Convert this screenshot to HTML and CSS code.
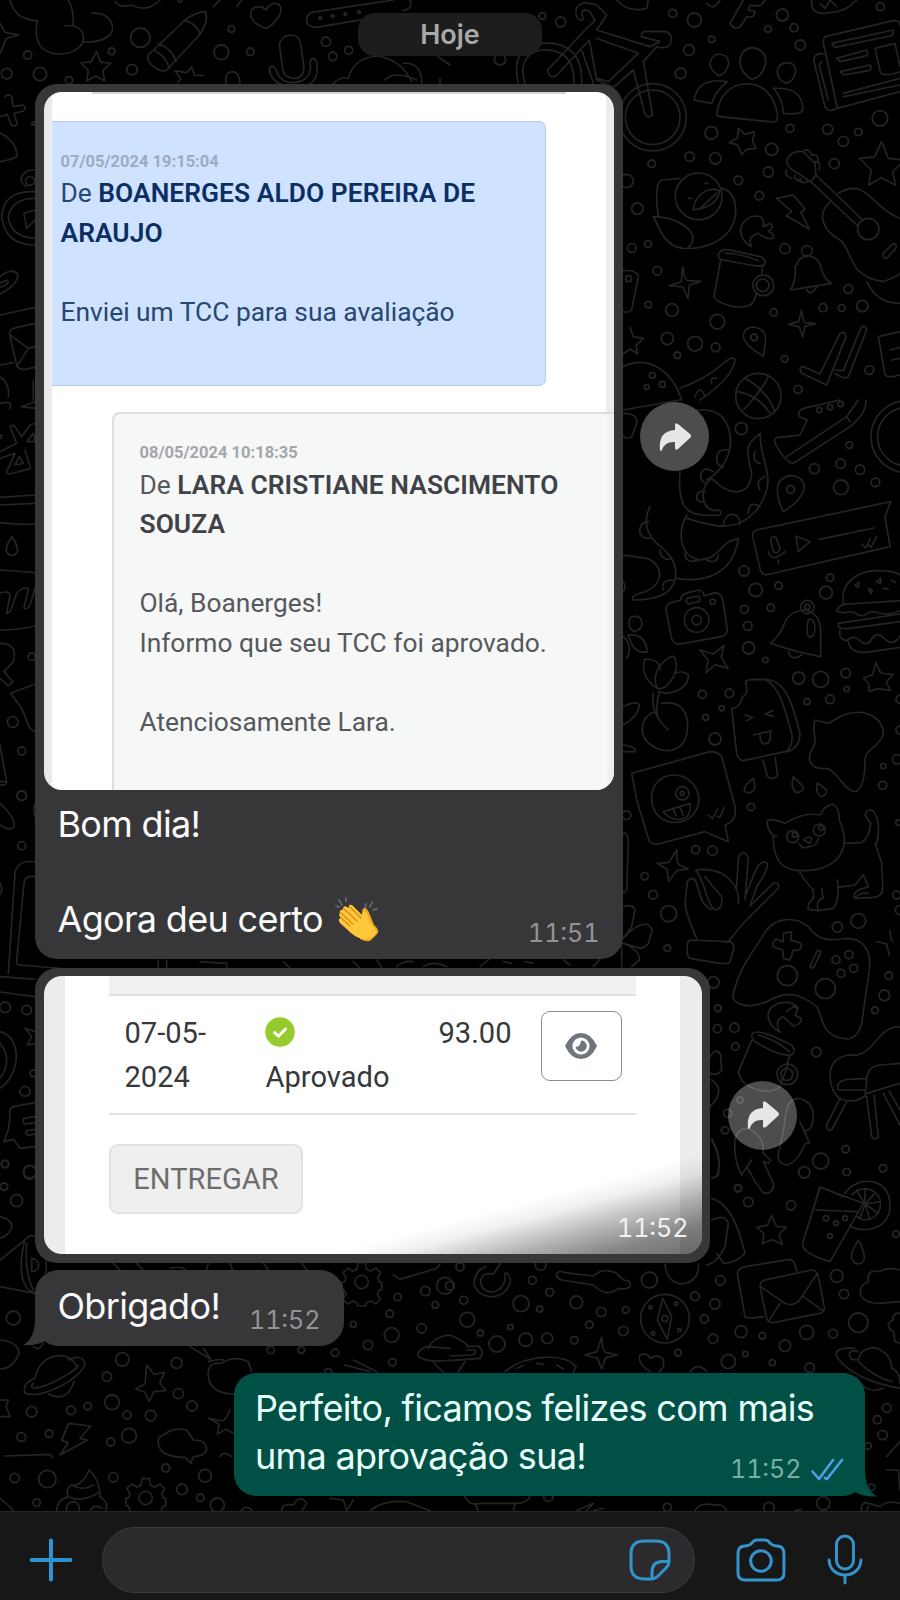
FILE: index.html
```html
<!DOCTYPE html>
<html lang="pt-BR">
<head>
<meta charset="utf-8">
<title>Conversa</title>
<link rel="stylesheet" href="styles.css">
</head>
<body>
<div class="screen">
<svg class="wallpaper" width="900" height="1600" viewBox="0 0 900 1600" aria-hidden="true">
 <g id="dots"></g>
 <!-- top left -->
 <g transform="scale(.33333)">
  <path d="M30 0Q45 60 112 62M112 62C100 120 120 162 180 162C260 160 270 90 220 78Q205 75 195 78M205 0Q225 40 218 76M275 40C330 35 350 80 330 105Q300 130 250 125M0 70L15 97L55 105L20 115L0 160M345 5Q360 25 395 15Q440 40 480 0M640 20L660 0M710 20L725 0"/>
  <path d="M290 155l12 32 30 2-23 22 5 32-27-15-27 15 5-32-23-22 32-4zM575 200l8 25 28 2M575 200l-15 18-35-6 18 25-10 10M445 165L555 60Q590 35 618 35Q625 70 598 105L500 210Q480 220 450 190Q440 178 445 165ZM475 130Q520 150 528 185M462 150Q500 170 508 205M555 62Q590 70 600 103"/>
  <path d="M800 85C760 75 735 40 765 22Q785 15 798 30Q815 0 838 15C855 35 825 70 800 85ZM1230 0Q1240 25 1210 32M1090 58L950 82Q915 80 920 55Q925 35 950 35L1180 0"/>
  <path d="M872 105Q900 105 902 135L912 200Q912 235 880 235Q850 232 848 205L838 135Q842 108 872 105ZM808 205Q812 245 850 255M808 205Q820 190 828 210Q840 250 885 248Q940 240 930 185Q940 165 950 185Q958 240 925 255M680 255Q670 215 700 215Q720 220 720 255M1000 250Q1020 230 1045 235Q1060 175 1130 168Q1200 175 1235 245M1210 190Q1265 185 1265 250M1155 240Q1180 210 1250 240M1320 235v20M1300 160l50 35"/>
  <path d="M15 290q10-10 20 0l5 30 30-5q10 8 0 18l-28 8 10 30q-8 10-18 5l-12-32-30 8M0 398Q55 430 50 470Q30 480 0 485M100 510C65 510 50 545 80 560M105 575Q10 570 5 650Q15 735 105 735M105 595Q35 595 25 650Q30 710 105 715M105 630L72 640L80 685L105 660M0 830Q30 805 52 820Q60 850 0 882M0 850L20 840Q35 850 0 862M0 945L105 922M105 970L40 985Q25 990 30 1010L50 1095Q55 1110 75 1108L105 1102M30 1005L85 1045L105 1040M85 1045L50 1100M0 1095L40 1088M0 1130q30 20 25 60M100 1140v60"/>
 </g>
 <!-- top right -->
 <g transform="translate(450 0) scale(.33333)">
  <path d="M205 252Q180 140 270 130Q400 120 395 252M225 252Q200 165 275 150Q375 145 372 252M293 210L405 90L435 62L420 35Q385 20 400 55Q395 70 380 50Q370 15 405 8L440 15L470 45L440 90L600 140L630 125L575 110Q570 90 600 95L650 95Q670 105 662 130Q650 150 620 140L580 185L608 345Q590 360 583 335L550 210L490 262L440 240L418 120L318 228Q295 235 293 210ZM440 115L565 160L475 245L440 235M395 150L430 250"/>
  <circle cx="608" cy="352" r="101"/><circle cx="608" cy="352" r="82"/>
  <path d="M500 0Q535 40 590 25L595 0M770 10q20 25 40-10M880 0L840 70Q850 90 870 80L890 50Q915 55 915 35L895 30L900 15Q935 25 945 0M1085 0Q1080 50 1140 38Q1190 35 1220 0M1110 10l15 15 15-25 20 20"/>
  <path d="M1125 110L1330 62Q1350 60 1350 75M1125 110Q1115 120 1125 150L1162 325L1350 275M1110 160Q1090 165 1092 185L1125 320Q1135 340 1162 325M1110 160L1130 165M1115 185Q1105 190 1110 205L1135 300M1145 130L1330 90Q1330 108 1320 108L1155 142ZM1160 175L1250 150Q1258 165 1245 168L1170 185ZM1172 215L1260 195Q1268 208 1255 212L1180 225ZM1180 280L1350 235M1182 290L1350 255M1275 145L1335 130L1350 200M1275 145L1292 220Q1310 230 1350 215"/>
  <path d="M805 162Q840 165 835 195Q825 225 805 227Q780 210 780 190Q785 165 805 162ZM908 143Q950 150 947 190Q935 235 905 237Q870 220 870 180Q875 145 908 143ZM1010 188Q1040 190 1037 215Q1030 245 1010 250Q980 240 982 210Q988 190 1010 188ZM800 345C810 220 970 220 982 345Q985 365 970 366L810 350ZM832 245Q745 230 732 300L785 310Q795 275 832 245ZM970 265Q1060 260 1058 330Q1055 345 1000 340Q1000 300 970 265Z"/>
  <path d="M865 385l20 18 28-8-5 30 10 20-28 3-15 15-12-28-25-7 25-15zM1295 425l20 50 48 5-35 35 8 40-42-22-38 22 8-45-35-35 45-5z"/>
  <path d="M625 650Q610 540 640 540L690 535M815 565C860 575 870 640 840 690Q790 750 700 745Q650 740 625 680L610 650Q660 650 700 675Q750 710 715 742M730 630C735 580 775 560 808 572Q805 620 730 630ZM750 625L800 580M765 550h8M715 595h10"/>
  <circle cx="746" cy="589" r="70"/>
  <path d="M905 740Q890 710 925 700Q950 720 970 715Q975 700 955 695Q975 680 960 670L940 680Q945 650 920 648C870 650 850 710 905 740ZM980 595l50-10 35 42-12 10 25 50-70-40 18-12z"/>
  <path d="M805 765Q810 745 840 750L930 770Q950 775 943 795Q930 800 900 795L820 780Q805 778 805 765ZM825 760Q860 758 925 782M812 780L792 890Q795 905 850 920Q900 925 910 905L920 880M938 800L935 825"/>
  <circle cx="940" cy="856" r="31"/><circle cx="938" cy="856" r="19"/><circle cx="1071" cy="753" r="16"/>
  <path d="M1022 870Q1040 835 1035 800Q1055 760 1080 768Q1110 775 1115 810Q1125 840 1145 850ZM1070 868Q1080 890 1100 862M1080 545L1045 520Q1010 505 1010 480Q1025 450 1060 455L1095 490L1098 525L1082 545L1220 675M1098 525L1238 660M1060 455q15-15 25 10M1085 465q20-5 20 20M1095 485q20 0 12 25M1010 510q-10 15 15 25M1035 525q-5 15 20 20M1050 535q0 20 28 8"/>
  <circle cx="1255" cy="687" r="32"/>
  <path d="M1165 580C1250 530 1260 620 1350 655M1142 605C1100 640 1115 690 1170 720C1210 750 1190 830 1300 845Q1340 830 1350 820M1250 845Q1280 910 1350 910M1300 760L1330 730Q1345 735 1335 748L1310 775Q1297 775 1300 760M518 812Q560 808 565 830L545 930Q535 940 520 935"/>
  <path d="M698 800q5 40 15 42l40 2-35 12-4 40-15-35-40-4 35-12zM1055 930q3 32 10 38l32 3-32 8-7 32-10-30-32-8 30-8zM540 982l10 28 30 5-22 22 5 25-22-15-22 15"/>
  <path d="M940 1068Q880 1035 880 1005C885 970 945 975 947 1015Q945 1045 940 1068ZM1050 1105Q1055 1095 1070 1105L1110 1122L1170 1000Q1185 990 1188 1010L1130 1155L1055 1120ZM1155 1110L1180 1112L1232 985Q1245 970 1250 990L1195 1130Q1185 1140 1155 1120M1285 1010L1350 995M1285 1010L1305 1125Q1315 1135 1350 1125M1320 1050L1350 1042M1325 1080L1350 1075"/>
  <path d="M518 1100C600 1060 670 1120 695 1200M690 1165Q770 1135 820 1090Q850 1065 855 1080Q850 1130 750 1200M735 1190q15-40 30 0M785 1150q-5-20 15-15"/>
  <circle cx="925" cy="1188" r="68"/><path d="M885 1135Q950 1170 975 1235M865 1175Q930 1190 960 1240M955 1130Q930 1180 880 1230"/>
 </g>
 <!-- middle right -->
 <g transform="translate(450 400) scale(.33333)">
  <path d="M518 30L690 0M518 40Q565 40 560 70L545 110Q530 118 520 110M600 320Q570 380 620 430Q690 480 675 540Q660 600 550 600Q540 590 570 580C650 560 640 490 590 475L518 465M595 365Q565 370 570 400Q580 420 605 412M630 450Q630 480 665 478M640 570Q630 540 670 540M520 545Q530 560 520 575"/>
  <path d="M740 30Q840 20 842 130Q835 200 770 240M690 215C680 340 720 350 810 345Q820 325 790 332C750 320 750 260 785 235C850 300 900 280 905 220C890 150 880 140 930 100C930 200 990 230 920 330C860 400 790 380 710 355M710 345C680 400 690 470 750 480C820 470 800 430 865 415C850 520 770 550 680 535M835 150q-35-5-35 30q0 15 20 22M790 215q-30-20-38 10q0 20 15 25M765 275q-25-5-25 20q5 15 20 10M915 155q-10 30 15 35M945 230q-30 10-15 40M930 320q-35-20-35 20M820 375q5-35 30-32 20 5 20 30M705 460q0 30 35 22M770 480q30 15 35-15"/>
  <path d="M1030 190Q1010 190 975 130Q970 110 990 112L1050 105L1072 60L1048 50Q1040 35 1060 25L1170 0M1030 190L1200 80Q1250 40 1248 0M1010 170L1190 50L1225 0M1190 50L1200 65"/>
  <circle cx="1371" cy="110" r="108"/><circle cx="1371" cy="110" r="88"/>
  <path d="M1000 335Q975 285 985 250C1010 210 1070 225 1062 270Q1050 305 1000 335ZM920 390L1322 305L1305 350L1320 440L960 522Q935 530 930 505L908 410Q905 395 920 390ZM962 420Q965 405 978 412L990 445Q985 465 970 455ZM955 455Q965 490 1005 455M985 480v12M1038 408L1080 425L1045 455ZM1108 418L1272 384M1235 432l12 12 15-30M1255 435l8 7 17-32"/>
  <path d="M665 608L692 600Q695 580 715 578L745 570Q765 575 762 588L795 578Q815 580 818 600L832 690Q830 705 815 710L690 732Q670 735 665 715L648 630Q648 612 665 608ZM710 595L745 588Q755 600 745 605L715 612Q705 605 710 595Z"/>
  <circle cx="740" cy="660" r="37"/><circle cx="740" cy="660" r="14"/><circle cx="788" cy="605" r="8"/><circle cx="1072" cy="621" r="20"/><circle cx="1072" cy="621" r="8"/>
  <path d="M962 730Q995 700 1005 665Q1025 630 1065 630Q1110 640 1112 690L1112 770Q1030 755 962 730ZM1015 755Q1025 785 1055 765M1075 660Q1090 650 1095 680Q1095 710 1080 712Q1065 705 1075 660ZM1180 610C1170 550 1220 510 1290 512Q1330 512 1350 525M1160 632Q1170 610 1200 612L1350 602M1160 632q15 10 30 5t30 5t30 0t30-5t30 5t40-10M1165 670L1350 642M1165 670Q1160 690 1200 685L1350 665M1170 690Q1165 720 1190 722q20-20 40 0t35-5t40 0t45-10M1195 725Q1200 760 1250 757L1350 742M1215 555l12-8-2 16zM1255 565l12 6-4 10zM1280 545l12-10v16zM1300 565l15 2M1325 540l12 8"/>
  <path d="M750 750l40 12 32-26-8 35 20 35-38-12-28 24 6-38zM1278 787l14 32 37 5-20 22 12 25-38-5-25 8-3-25-15-15 28-10z"/>
  <path d="M622 865C580 840 575 800 585 778Q625 775 632 808M622 865C600 820 640 775 672 768Q690 810 660 845Q640 870 622 865ZM675 820Q700 810 715 825Q715 870 650 880L625 875M610 880Q600 940 655 990M628 880Q618 905 622 945M615 935C570 950 560 1010 610 1040C670 1070 720 1040 712 960Q700 900 635 910M550 650q20-5 25 15t-20 30q-18-5-18-25t13-20M535 705q50-5 58 50Q550 765 535 705M520 710Q550 740 530 775M518 920Q560 900 568 915Q565 950 520 975M520 1035Q560 1040 555 1055H520"/>
  <path d="M845 925Q870 925 878 890Q895 885 888 850Q880 838 920 838L960 840C1010 850 1030 920 1050 1000Q1050 1040 1020 1052L880 1082Q865 1080 860 1060ZM945 838C990 860 1005 930 1025 1000Q1030 1035 1010 1055M938 1080L952 1128Q970 1145 983 1125L975 1072M885 945L908 952 890 962M968 932L945 942 970 950M910 1005L965 992M930 1005Q930 1030 945 1032 965 1030 960 998M1095 960L1135 970L1180 945C1250 920 1310 960 1298 1010C1270 1060 1240 1040 1245 1100Q1240 1170 1215 1175C1180 1170 1160 1110 1130 1105C1080 1110 1070 1080 1085 1050C1110 1010 1080 1000 1095 960Z"/>
  <path d="M545 1120L780 1055Q805 1055 815 1070L850 1200M545 1120L560 1200M605 1200C600 1100 740 1100 747 1200M910 1135Q875 1160 885 1175Q910 1185 915 1160ZM1030 1130Q1020 1165 1040 1178Q1060 1175 1060 1160ZM1102 1148Q1095 1180 1115 1190Q1130 1185 1130 1170Z"/>
 </g>
 <!-- lower right -->
 <g transform="translate(450 800) scale(.33333)">
  <path d="M560 0L595 115Q600 135 625 132L765 95L835 125L825 75Q870 60 850 0M605 0C610 90 740 90 747 0M640 35L720 10Q725 55 690 58Q660 60 640 35ZM670 28L678 48M690 22L700 45M775 45l12 12 15-30M800 48l10 5 12-30"/>
  <path d="M680 150q-2 35 8 45l27 12-35 5-24 32-5-36-30-18 35-2zM740 215C720 205 810 200 840 240Q870 270 865 310M860 260L865 175Q880 140 895 175L885 300M885 290L905 240Q930 170 952 190Q955 210 920 260L900 318L970 250Q990 245 985 265L880 370L832 428M740 215Q755 235 765 270C790 360 820 330 815 290Q790 260 765 230M740 415Q710 350 705 310L712 245Q725 225 738 245L755 300Q770 325 785 328M720 420L840 425Q855 430 850 450L840 485Q835 492 810 490L720 475Q710 470 712 445Q710 425 720 420Z"/>
  <path d="M980 110Q950 100 952 60Q970 55 1005 70Q1060 35 1110 45Q1125 15 1150 12Q1170 30 1168 60C1200 130 1180 190 1100 208C1000 225 970 190 970 110M1048 215Q1070 250 1090 270L1090 295Q1070 310 1075 328L1105 332 1150 325Q1170 300 1162 240M1105 332Q1095 300 1120 295L1115 265M1165 262L1215 255L1240 225L1255 260L1225 270Q1205 285 1215 295L1270 292Q1300 290 1298 260L1295 190L1275 130M1182 130L1235 128Q1260 110 1262 70L1245 45Q1250 25 1270 32Q1295 70 1280 130M1215 295Q1230 275 1255 280M1060 120Q1075 105 1085 115L1080 130ZM1048 130Q1055 150 1075 140 1100 140 1105 115"/>
  <circle cx="1028" cy="110" r="18"/><circle cx="1108" cy="90" r="18"/>
  <path d="M850 580C870 500 900 470 950 390C980 350 1040 350 1075 380C1110 430 1150 420 1190 415C1240 415 1265 450 1258 510L1235 670Q1225 715 1190 717C1110 710 1120 650 1100 620C1050 580 1010 570 950 605C890 630 840 610 850 580ZM1000 400L1025 395 1022 420 1052 430Q1060 445 1040 452L1030 450 1020 480 1000 475 998 450 970 440Q965 425 980 418L1000 425ZM1102 450L1113 455 1090 505 1080 500Z"/>
  <path d="M518 100Q535 95 535 130L530 270Q525 280 518 275M520 320Q550 310 555 330L545 380 520 415Q560 370 590 372Q615 385 600 410 600 440 570 445L520 430Q570 450 568 480L545 500M515 430V500M430 500L460 465M90 500L120 475M160 485L185 490M225 485L250 490M340 480L360 495"/>
  <path d="M990 697Q970 660 1000 650L1030 678Q1060 670 1052 655L1035 645Q1050 620 1030 620L1010 635M990 697C930 660 950 600 1020 608Q1040 615 1045 625M908 700Q920 690 960 705L1025 735Q1040 755 1025 765Q1000 768 960 750L915 725Q900 710 908 700ZM925 705Q980 720 1018 755M905 722L865 815Q870 850 910 865Q960 885 990 860L1015 790M1018 768L1012 790"/>
  <circle cx="1012" cy="823" r="31"/><circle cx="1010" cy="823" r="18"/>
  <path d="M1350 680Q1310 680 1280 720Q1240 770 1210 765C1160 765 1140 790 1140 830Q1145 890 1180 900Q1230 910 1250 880L1350 850M1350 790L1290 795Q1250 800 1250 840L1245 890M1165 870Q1155 840 1200 838L1250 835M1165 870H1245M1170 895L1130 975Q1130 995 1145 990L1190 905M1250 890L1265 1010Q1275 1025 1285 1010L1272 885M1300 880L1350 975M1318 875L1350 930M1320 392q2 28 8 32M1280 425L1310 432 1318 465"/>
  <path d="M780 770Q800 740 812 765L815 810Q800 830 780 820M785 840Q830 870 780 920M785 1020Q820 1070 800 1130L785 1135"/>
  <path d="M1040 895Q1090 900 1090 950Q1085 1000 1060 990L1078 1028 1065 1032Q1040 1090 1010 1095Q980 1090 985 1060Q1000 1000 1005 960Q1010 900 1040 895ZM1050 965L1078 1028M855 1020Q860 985 895 985Q945 1010 940 1060L962 1080 955 1090 940 1085 970 1150Q975 1180 940 1180Q910 1140 890 1100L905 1080 880 1115 875 1125Q850 1080 855 1020ZM1110 1160L1180 1190M1110 1160L1098 1200"/>
 </g>
 <!-- lower left edge -->
 <g transform="translate(0 780) scale(.33333)">
  <path d="M0 70Q45 110 42 140Q30 155 0 135M105 245Q50 240 45 280L25 580M105 290Q75 285 72 310L50 545Q50 555 60 555L240 570M0 590L105 598M0 636L105 650M75 745L105 755M75 745L95 770 82 795 105 790M0 755C65 770 65 880 0 925M0 790Q40 840 0 895M0 310Q10 325 0 345M105 968L40 980Q25 985 30 1010L25 1050 12 1085 40 1078 60 1105 105 1100M105 1010L72 1015Q65 1025 75 1032L105 1028M105 1048L80 1052Q75 1060 85 1067L105 1062M475 540V570M500 540V570M600 545L680 550V570M850 545L875 570M1060 545L1085 570M1130 540L1150 570M1190 560q20-20 50-15M1270 560q30-20 70 0"/>
  <path d="M105 70q-8 20 0 40"/>
 </g>
 <!-- bottom left -->
 <g transform="translate(0 1120) scale(.33333)">
  <path d="M0 290Q40 300 35 325Q20 350 0 355M0 420L75 360M0 500L105 520M105 350Q90 340 75 360C55 430 60 510 105 518M105 350C150 380 150 500 105 518M95 415C125 420 120 455 95 455ZM80 370C75 430 85 480 100 510M0 660Q55 665 57 700Q40 745 0 747M100 680Q115 695 130 670"/>
  <path d="M105 775C120 690 220 690 230 745M105 775Q65 790 75 820C130 840 250 770 255 730Q245 700 205 720M100 790Q90 800 100 805C150 800 230 750 235 735M145 822Q200 850 222 785M440 735l22 28 32-6-15 30 18 25-35 3-15 30-12-28-28-10 28-15zM625 725Q660 715 670 720M625 770Q620 725 665 730Q700 705 745 725L755 755M625 770Q630 820 700 822M340 430L360 450M410 430L430 450M510 445Q550 435 560 455M625 430L618 455M690 430L700 455M790 430L810 455M570 680L632 718 610 685M0 840H25L18 860 30 890 0 890"/>
  <path d="M205 910L272 918 240 955 262 960 180 1005 205 968 185 962ZM15 1008L150 1003 157 1012M480 985Q465 955 490 945Q520 920 560 930L580 960Q620 960 620 990 610 1010 580 1010L572 1030 555 1012Q490 1010 480 985ZM690 868q-12 35-25 35l-38-8 30 18-5 30 25-15 22 12M660 1010q10-20 35 0"/>
  <path d="M170 1175Q170 1140 205 1130Q195 1105 215 1095Q245 1100 268 1050Q300 1080 300 1130Q330 1150 315 1175M205 1130Q250 1150 300 1115M215 1095Q250 1115 280 1095M200 1175Q195 1145 225 1145Q245 1160 235 1175M270 1175Q280 1150 305 1165M0 1135Q20 1150 40 1172M845 1172Q845 1150 880 1155Q900 1120 920 1150L905 1175M990 1135L1030 1140 1040 1172 1060 1140M1110 1172Q1150 1140 1220 1145L1290 1172M1180 465L1200 478 1310 445 1320 432M905 430L925 455M1035 735L1110 755M1060 720L1130 755M1350 685L1280 680Q1250 690 1255 710Q1290 730 1350 720M1285 685Q1300 650 1350 645M1300 725Q1315 745 1330 755"/>
  <g id="gear"><path d="M1074 428h22l4 20 12 6 16-10 14 14-9 15 5 12 7 2v22l-8 2-5 12 9 15-14 14-16-9-11 5-4 10h-22l-4-10-11-5-16 9-14-14 9-15-5-12-7-2v-22l8-2 4-12-9-15 14-14 16 10 12-6z"/><circle cx="1085" cy="486" r="20"/></g>
  <use href="#gear" transform="translate(-648 648)"/>
 </g>
 <!-- bottom right -->
 <g transform="translate(450 1120) scale(.33333)">
  <path d="M108 440Q75 450 72 490C80 540 170 550 182 480Q175 455 165 460V480C150 530 95 525 92 485Q95 455 130 462L152 430M320 460Q330 450 345 458L430 468Q460 440 500 460L520 480Q545 480 540 500 530 510 505 505 470 535 430 495L335 480Q318 475 320 460ZM645 432Q650 490 700 492 750 480 745 432"/>
  <circle cx="645" cy="596" r="73"/><circle cx="645" cy="596" r="9"/>
  <path d="M638 535L665 590 652 658 622 600ZM455 652q2 40 12 45l35 8-35 8-12 34-12-32-38-10 36-10zM600 755Q560 730 570 705Q590 695 600 715Q625 700 640 720 645 745 625 755M165 755C230 700 350 700 378 740L370 755M200 745l20-8M260 730l20 3M320 735l20 12M0 645Q40 660 55 680L85 678Q105 695 90 715L0 722M50 690L75 690Q82 700 65 705L0 708M45 725L25 755M720 755Q745 725 770 755"/>
  <path d="M885 590L862 460Q865 445 885 440L1020 418Q1035 420 1040 455M885 590Q890 598 940 590M945 480L1085 450Q1100 450 1105 470L1123 560Q1125 575 1110 580L970 608Q955 610 950 595L930 500Q930 485 945 480ZM932 500L1005 550Q1025 560 1045 545L1102 460M990 550L955 605M1060 530L1118 572M1240 250L1110 202 1058 370Q1055 400 1140 425L1240 250ZM1095 270L1225 275"/>
  <path d="M1185 220C1220 165 1320 170 1320 255C1320 330 1240 340 1205 320M1205 225C1240 190 1290 210 1292 250C1290 300 1240 310 1220 290M1245 252L1245 208M1245 252L1275 220M1245 252L1290 245M1245 252L1285 280M1245 252L1260 298M1245 252L1230 295M1245 252L1220 210"/>
  <path d="M965 287l14 32 30 2-22 22 10 30-32-14-28 12 5-30-22-20 32-5zM1225 360Q1200 400 1205 415C1215 440 1245 435 1243 410Q1240 385 1225 360ZM1350 450Q1310 440 1290 455 1250 445 1255 485 1220 500 1235 530 1250 550 1290 550L1350 545M1350 580Q1330 575 1328 600L1315 610Q1315 630 1330 635L1335 665 1350 670"/>
  <path d="M785 235Q850 250 885 400Q860 430 820 430L800 400M785 300Q825 280 835 310L825 380Q800 430 770 435M785 55Q815 120 805 165L785 175"/>
  <path d="M1225 720Q1230 685 1275 683Q1325 700 1325 745M1225 720L1205 718Q1190 695 1210 692L1225 695M1215 685Q1150 680 1160 710Q1210 780 1350 805M1325 745Q1350 755 1350 790M1225 725Q1270 770 1325 785M1220 775Q1250 825 1300 805M1310 1010L1350 965M1310 1050L1345 1050 1350 1110M45 1130Q60 1160 90 1150H200Q230 1150 240 1130M75 1150L85 1175M195 1150L190 1175M380 1172L430 1150 410 1172M430 1172L460 1165M735 1172Q750 1145 790 1155Q820 1150 830 1172M1035 1172L1055 1168M1235 1172Q1230 1150 1250 1148L1290 1160Q1310 1140 1350 1150M1250 1172L1255 1158"/>
 </g>
 <!-- left edge, middle -->
 <g transform="translate(0 400) scale(.33333)">
  <path d="M0 10Q40 0 30 25M65 20L105 5M65 20L105 25M30 80Q40 70 48 85L65 110 90 75 105 70M30 80L50 130 0 155M80 125L100 100 105 125ZM75 150L92 205Q60 215 25 222Q15 218 25 205L45 160 0 175M45 195L58 170 70 190ZM0 292L105 285M0 315L105 310M0 368Q60 375 105 372M0 510L105 518M35 410Q15 440 20 455C30 475 55 465 52 445Q48 425 35 410ZM0 580Q25 570 30 585L20 640Q30 640 35 625L50 580Q65 560 85 565L72 625Q85 630 92 610L105 565M0 690Q60 690 105 678M0 730Q55 730 40 785L12 815 38 845 25 858 0 835M105 852L32 880 65 925 90 985 105 995M0 1035L20 1145Q20 1155 0 1155M0 1145H20"/>
 </g>
</svg>

<main class="chat">
 <div class="day">Hoje</div>

 <article class="bubble in photo-msg first">
  <div class="photo forum">
   <div class="post post-blue">
    <div class="stamp">07/05/2024 19:15:04</div>
    <div class="line">De <b>BOANERGES ALDO PEREIRA DE</b></div>
    <div class="line"><b>ARAUJO</b></div>
    <div class="line"></div>
    <div class="line">Enviei um TCC para sua avaliação</div>
   </div>
   <div class="post post-gray">
    <div class="stamp">08/05/2024 10:18:35</div>
    <div class="line">De <b>LARA CRISTIANE NASCIMENTO</b></div>
    <div class="line"><b>SOUZA</b></div>
    <div class="line"></div>
    <div class="line">Olá, Boanerges!</div>
    <div class="line">Informo que seu TCC foi aprovado.</div>
    <div class="line"></div>
    <div class="line">Atenciosamente Lara.</div>
   </div>
  </div>
  <div class="body caption">
   <p class="text">Bom dia!<br><br>Agora deu certo<svg class="clap" width="48" height="48" viewBox="0 0 48 48" role="img" aria-label="aplausos">
     <g fill="none" stroke="#5e646b" stroke-width="2" stroke-linecap="round"><path d="M3 10l3 1M6 4l3 5M13 2l0 3M33 8l-1 4M39 6l-2 5M44 13l-4 1"/></g>
     <path d="M29 17Q29 12 32 12Q35 13 37 19L41 29Q46 33 45 37L38 44Q35 47 27 43Z" fill="#f2ac1e"/>
     <path d="M7 17Q6 14 9 14L10 13Q10 9 14 11L16 12Q15 8 19 9L29 19Q31 13 34 17L37 27Q43 33 43 37Q40 43 32 43Q25 43 18 37L7 27Q4 23 8 22Q5 19 7 17Z" fill="#ffc83a"/>
     <path d="M8 17l12 11M11 13l13 12M17 11l11 11M8 22l9 8" fill="none" stroke="#d98b16" stroke-width="1.3" stroke-linecap="round"/>
    </svg></p>
   <time class="time">11:51</time>
  </div>
  <div class="forward"><svg width="34" height="30" viewBox="0 0 34 30"><path d="M2 28Q0 9 17 8V3Q17 0 20 2L32 12Q34 14 32 16L20 27Q17 29 17 26V20Q7 19 4 28Q3 30 2 28Z" fill="#e6e6e6"/></svg></div>
 </article>

 <article class="bubble in photo-msg second">
  <div class="photo grades">
   <div class="sheet">
    <div class="thead"></div>
    <div class="row">
     <div class="date">07-05-<br>2024</div>
     <div class="status"><svg class="ok" width="30" height="30" viewBox="0 0 30 30"><circle cx="15" cy="15" r="14.7" fill="#95cb2f"/><path d="M9.5 15.5l4 3.8 7-7.2" fill="none" stroke="#fff" stroke-width="2.8" stroke-linecap="round" stroke-linejoin="round"/></svg><span>Aprovado</span></div>
     <div class="score">93.00</div>
     <div class="eye"><svg width="34" height="28" viewBox="0 0 34 28"><path d="M1 14Q7 1 17 1T33 14Q27 27 17 27T1 14Z" fill="#6e757c"/><circle cx="17" cy="14" r="8.6" fill="#fff"/><path d="M17 8.5A5.6 5.6 0 1 1 11.6 14.5Q16 16 17 8.5Z" fill="#6e757c"/></svg></div>
    </div>
    <div class="submit">ENTREGAR</div>
   </div>
   <time class="time over">11:52</time>
  </div>
  <div class="forward"><svg width="34" height="30" viewBox="0 0 34 30"><path d="M2 28Q0 9 17 8V3Q17 0 20 2L32 12Q34 14 32 16L20 27Q17 29 17 26V20Q7 19 4 28Q3 30 2 28Z" fill="#e6e6e6"/></svg></div>
 </article>

 <article class="bubble in third">
  <svg class="tail-in" width="26" height="38" viewBox="0 0 26 38"><path d="M12 0V10Q12 31 0 37Q14 38 22 33L26 0Z" fill="#37373a"/></svg>
  <div class="body"><p class="text">Obrigado!</p><time class="time">11:52</time></div>
 </article>

 <article class="bubble out">
  <svg class="tail-out" width="26" height="38" viewBox="0 0 26 38"><path d="M14 0V10Q14 31 26 37.500Q12 38 4 33L0 0Z" fill="#005045"/></svg>
  <div class="body"><p class="text">Perfeito, ficamos felizes com mais<br>uma aprovação sua!</p>
   <div class="meta"><time class="time">11:52</time><svg width="33" height="23" viewBox="0 0 33 23" fill="none" stroke="#4c9fe8" stroke-width="2.600" stroke-linecap="round" stroke-linejoin="round"><path d="M1.500 13.500L8 21 22 2M14 20l2 1L31 2"/></svg></div>
  </div>
 </article>
</main>

<footer class="composer">
 <svg class="plus" width="44" height="44" viewBox="0 0 44 44" fill="none" stroke="#2f93d1" stroke-width="4" stroke-linecap="round"><path d="M22 2.500v39M2.500 22h39"/></svg>
 <div class="field"><svg width="42" height="42" viewBox="0 0 42 42" fill="none" stroke="#3593cb" stroke-width="3" stroke-linejoin="round"><path d="M22 40H16Q2 40 2 27V15Q2 2 15 2H27Q40 2 40 15V23Q40 26 37 29L29 37Q26 40 22 40ZM40 22.500H33Q23 23 23 33V40"/></svg></div>
 <svg class="camera" width="50" height="44" viewBox="0 0 50 44" fill="none" stroke="#3593cb" stroke-width="3" stroke-linejoin="round"><path d="M9 8Q13 8 16 5Q18 2 21 2H29Q32 2 34 5Q37 8 41 8Q48 8 48 16V35Q48 42 41 42H9Q2 42 2 35V16Q2 8 9 8Z"/><circle cx="25" cy="23" r="10.300"/></svg>
 <svg class="mic" width="36" height="51" viewBox="0 0 36 51" fill="none" stroke="#3593cb" stroke-width="3" stroke-linecap="round"><rect x="9.500" y="2" width="17" height="33" rx="8.500"/><path d="M2 26C3 46 33 46 34 26M18 42V49"/></svg>
</footer>
</div>
<script src="dots.js"></script>
</body>
</html>
```

FILE: styles.css
```css
* { box-sizing: border-box; }
body { margin: 0; background: #000; }
p { margin: 0; }

.screen {
  position: relative;
  display: flex;
  flex-direction: column;
  width: 900px;
  height: 1600px;
  overflow: hidden;
  background: #000;
  font-family: Inter, "Liberation Sans", sans-serif;
}
.wallpaper {
  position: absolute;
  inset: 0;
  fill: none;
  stroke: #242424;
  stroke-width: 5px;
  stroke-linejoin: round;
  stroke-linecap: round;
}
#dots { stroke-width: 1.8px; }

.chat {
  position: relative;
  flex: 1;
  display: flex;
  flex-direction: column;
  align-items: flex-start;
  padding: 12.500px 35px 0;
}
.day {
  align-self: center;
  width: 184px;
  height: 43px;
  margin-bottom: 28.500px;
  border-radius: 17px;
  background: #1d1d1d;
  color: #a9a9a9;
  font-size: 27px;
  font-weight: 600;
  line-height: 43px;
  text-align: center;
}

.bubble {
  position: relative;
  flex: none;
  border-radius: 22px;
  background: #37373a;
  color: #fafafa;
}
.photo-msg { padding: 8px 8.500px 0 9px; }
.first { width: 587.500px; height: 875px; }
.second { width: 675px; height: 295px; margin-top: 8.500px; }
.third { width: 308.500px; height: 76px; margin-top: 7.500px; border-radius: 24px; }
.out {
  align-self: flex-end;
  width: 631.500px;
  height: 123.500px;
  margin-top: 26.500px;
  border-radius: 22px;
  background: #005045;
}

.photo { position: relative; border-radius: 18px; overflow: hidden; }

.forum {
  height: 698px;
  padding: 28.500px 8px 0;
  background: linear-gradient(90deg, #e9e9eb 0 7px, #fff 9px 561px, #ececec 563px);
  font-family: Roboto, sans-serif;
}
.forum::before {
  content: "";
  position: absolute;
  left: 48px;
  top: 0;
  width: 474px;
  height: 1.500px;
  background: #d4d4d4;
}
.post { padding-top: 28px; }
.post-blue {
  width: 494px;
  height: 265.500px;
  padding-left: 8.500px;
  border: 1.500px solid #b3cae9;
  border-left: 0;
  border-radius: 0 7px 7px 0;
  background: #cfe2ff;
  color: #28486f;
}
.post-blue b { color: #0b2f63; }
.post-gray {
  height: 385px;
  margin: 26px -8px 0 59.500px;
  padding: 27px 0 0 26px;
  border: 2px solid #dcdddd;
  border-width: 2px 0 0 2px;
  border-radius: 8px 0 0 0;
  background: linear-gradient(90deg, #f6f7f7 493px, #efeff0 495px);
  color: #55595c;
}
.post-gray b { color: #3f4347; }
.post b { font-weight: 600; letter-spacing: .06px; }
.stamp {
  font-size: 16.500px;
  font-weight: 700;
  line-height: 24.800px;
  color: #a3a6a9;
  white-space: nowrap;
}
.post-blue .stamp { color: #9eabbf; }
.line { height: 39.550px; font-size: 26.350px; line-height: 39.550px; white-space: nowrap; }

.body { display: flex; justify-content: space-between; align-items: flex-end; padding: 13px 23px 0 22.500px; }
.caption { padding: 11px 14.500px 0 13.500px; }
.text { font-size: 36px; letter-spacing: -.68px; line-height: 47.600px; white-space: nowrap; }
.clap { margin: -16px 0 -8px 10px; vertical-align: -4px; }
.time {
  margin-bottom: -4px;
  font-size: 25px;
  font-variant-numeric: tabular-nums;
  line-height: 30px;
  color: #939397;
  white-space: nowrap;
}
.out .body { padding: 12.500px 21.500px 0 21.500px; }
/* the first line runs above the timestamp, so only the last line reserves width */
.out .text { width: 400px; color: #e9fffa; }
.meta { display: flex; flex: none; align-items: center; gap: 9px; margin-bottom: -4px; }
.meta .time { margin: 0; color: #78aea3; }

.grades {
  height: 278.500px;
  padding: 0 22px 0 21px;
  background: #ececee;
  font-family: Roboto, sans-serif;
}
.grades::after {
  content: "";
  position: absolute;
  inset: 0;
  background: linear-gradient(165deg, rgba(0,0,0,0) 78%, rgba(0,0,0,.06) 82%, rgba(0,0,0,.28) 88%, rgba(0,0,0,.48) 94%, rgba(0,0,0,.56) 100%);
}
.sheet { height: 100%; padding: 0 44px; background: #fff; color: #35393c; }
.thead { height: 20.500px; border-bottom: 2px solid #e0e0e0; background: #f1f1f2; }
.row {
  display: grid;
  grid-template-columns: 141px 173px 102px 81px;
  height: 119px;
  padding: 14.500px 0 0 15.500px;
  border-bottom: 2px solid #e2e2e2;
  font-size: 29.100px;
  line-height: 44.300px;
}
.status { display: flex; flex-direction: column; align-items: flex-start; }
.ok { margin: 6px 0 8.300px -1px; }
.eye {
  display: flex;
  align-items: center;
  justify-content: center;
  height: 70px;
  border: 1.800px solid #8a8c8d;
  border-radius: 9px;
}
.submit {
  width: 194px;
  height: 70px;
  margin-top: 29px;
  border: 2px solid #e2e2e2;
  border-radius: 9px;
  background: #efefef;
  color: #6d6d6d;
  font-size: 29.100px;
  line-height: 67px;
  text-align: center;
}
.over {
  position: absolute;
  z-index: 1;
  right: 13px;
  bottom: 15.500px;
  color: #f2f2f2;
  font-family: Inter, sans-serif;
}

.forward {
  position: absolute;
  display: flex;
  align-items: center;
  justify-content: center;
  width: 69px;
  height: 69px;
  border-radius: 50%;
  background: rgba(255,255,255,.3);
}
.first .forward { left: 605px; top: 318px; }
.second .forward { left: 693px; top: 113px; }
.tail-in { position: absolute; left: -12px; bottom: 0; }
.tail-out { position: absolute; right: -12px; bottom: -.5px; }

.composer {
  position: relative;
  display: flex;
  align-items: center;
  height: 89px;
  padding: 7px 37px 0 29px;
  border-top: 1.500px solid #262626;
  background: #171717;
}
.field {
  display: flex;
  align-items: center;
  justify-content: flex-end;
  width: 594px;
  height: 66px;
  margin: 0 41px 0 29px;
  padding-right: 23px;
  border: 1.500px solid #3b3b3d;
  border-radius: 33px;
  background: #2b2b2d;
}
.mic { margin-left: 41px; }
```

FILE: dots.js
```js
// Small circles of the wallpaper: each tile has an origin and [x, y, r] triplets at 3x scale.
const tiles = [
  [0, 0, [[83,165,12],[20,221,16],[120,222,20],[207,241,11],[335,154,10],[396,209,16],[421,113,29],[664,157,22],[751,155,11],[694,87,10],[978,125,14],[998,169,13],[1046,151,12],[961,54,4],[998,48,4],[1036,42,4],[1077,37,4],[90,543,13],[540,0,6],[100,370,5]]],
  [450, 0, [[332,66,15],[277,48,10],[150,178,17],[668,40,12],[733,60,21],[785,118,10],[717,150,16],[692,220,16],[954,87,10],[997,45,18],[1032,83,12],[1051,135,15],[1291,20,12],[1290,355,23],[1020,385,12],[1133,388,15],[1180,424,15],[1225,396,11],[1153,491,15],[784,399,19],[719,470,14],[796,475,17],[965,448,18],[605,491,11],[955,516,15],[865,541,13],[928,587,13],[530,543,20],[562,626,17],[545,744,13],[594,732,10],[622,812,13],[595,914,10],[666,930,19],[1005,746,15],[1195,867,13],[1237,918,17],[1175,924,10],[1119,923,12],[971,937,11],[802,965,22],[652,1016,18],[735,1031,22],[797,1042,13],[682,1066,10],[912,1012,10],[1004,1077,10],[1258,1110,13],[1044,1168,12],[607,1126,9],[637,1153,9],[590,1161,7],[536,836,9]]],
  [450, 400, [[874,86,18],[1198,135,10],[1093,206,15],[1172,191,14],[1230,209,14],[1276,247,13],[1173,262,22],[1022,268,12],[882,513,15],[917,570,20],[986,557,11],[1140,533,11],[1128,578,19],[883,628,12],[962,623,11],[893,678,13],[896,744,18],[946,780,8],[1046,834,18],[1112,838,24],[1187,819,14],[1190,867,8],[1071,905,9],[1140,898,13],[838,880,13],[757,883,12],[815,925,8],[767,952,9],[795,1017,18],[1300,1098,8],[1298,1156,12],[1341,1078,14],[1350,898,12],[697,1180,20],[697,1180,6],[1108,30,8],[1140,22,8],[1172,12,8],[1350,990,12]]],
  [450, 800, [[903,21,11],[737,149,12],[787,152,14],[584,229,11],[609,284,13],[656,341,24],[652,445,10],[530,46,13],[1162,381,15],[1225,363,22],[1012,527,30],[1126,566,30],[1158,479,12],[1197,464,12],[1211,505,12],[1173,520,12],[1316,527,11],[1303,586,16],[1275,631,10],[790,547,17],[804,625,10],[802,686,12],[853,683,14],[856,740,11],[1099,756,14],[833,940,12],[825,991,11],[1187,1048,11],[1112,1083,24],[1063,1117,17],[1190,1116,11],[1299,1105,11],[864,1165,11],[870,900,9],[1340,285,12],[1350,330,14],[1345,68,8],[1034,104,7],[1113,84,7]]],
  [0, 780, [[65,47,14],[65,197,12],[15,682,16],[80,690,14],[100,880,10],[75,934,15],[15,1152,11],[90,1175,19]]],
  [0, 1120, [[15,132,11],[12,200,11],[50,242,18],[90,157,20],[40,594,21],[367,718,20],[530,729,16],[321,770,14],[336,847,22],[535,821,15],[576,858,15],[452,887,16],[381,885,12],[263,859,11],[213,871,13],[95,875,16],[64,951,13],[147,941,11],[387,947,22],[332,966,12],[44,1074,14],[142,1077,26],[340,1072,14],[497,1044,12],[615,1067,19],[546,1108,16],[601,1133,11],[652,1155,21],[110,1148,11],[740,1180,18],[812,690,11],[904,690,10],[1005,698,11],[1104,675,14],[1175,645,22],[1177,727,11],[1169,581,11],[1265,625,14],[1276,513,14],[1193,531,11],[1306,555,10],[1335,497,25],[1060,613,9],[985,755,10]]],
  [450, 1120, [[247,481,12],[299,517,12],[213,551,24],[269,567,9],[379,547,19],[41,541,12],[52,599,22],[91,639,9],[181,621,8],[141,672,24],[227,659,20],[292,655,16],[373,661,11],[454,576,14],[527,570,10],[418,614,11],[520,633,14],[598,480,24],[811,481,14],[735,529,13],[795,552,15],[763,597,12],[789,656,14],[873,635,18],[937,647,10],[1005,677,17],[1070,637,21],[1149,641,13],[1225,608,29],[1182,522,14],[1160,468,19],[684,698,10],[835,725,21],[886,702,8],[967,728,9],[1079,743,14],[895,246,14],[1023,256,14],[864,205,10],[1128,295,8],[1158,310,7],[1185,295,7],[1140,348,7],[1338,342,10],[601,562,5],[679,551,5],[609,640,5],[688,630,5],[1310,864,13],[1282,899,12],[1298,945,14],[1254,978,10],[1265,1102,10],[652,1162,12],[957,1163,16],[1120,1150,20],[30,441,12],[272,435,16],[295,1130,14],[0,497,13]]],
  [0, 400, [[95,770,11],[38,966,16],[65,1053,12],[65,1187,14],[0,110,5]]]
];
const layer = document.getElementById("dots");
for (const [ox, oy, list] of tiles) {
  for (const [x, y, r] of list) {
    const c = document.createElementNS("http://www.w3.org/2000/svg", "circle");
    c.setAttribute("cx", ox + x / 3);
    c.setAttribute("cy", oy + y / 3);
    c.setAttribute("r", r / 3);
    layer.appendChild(c);
  }
}
```
